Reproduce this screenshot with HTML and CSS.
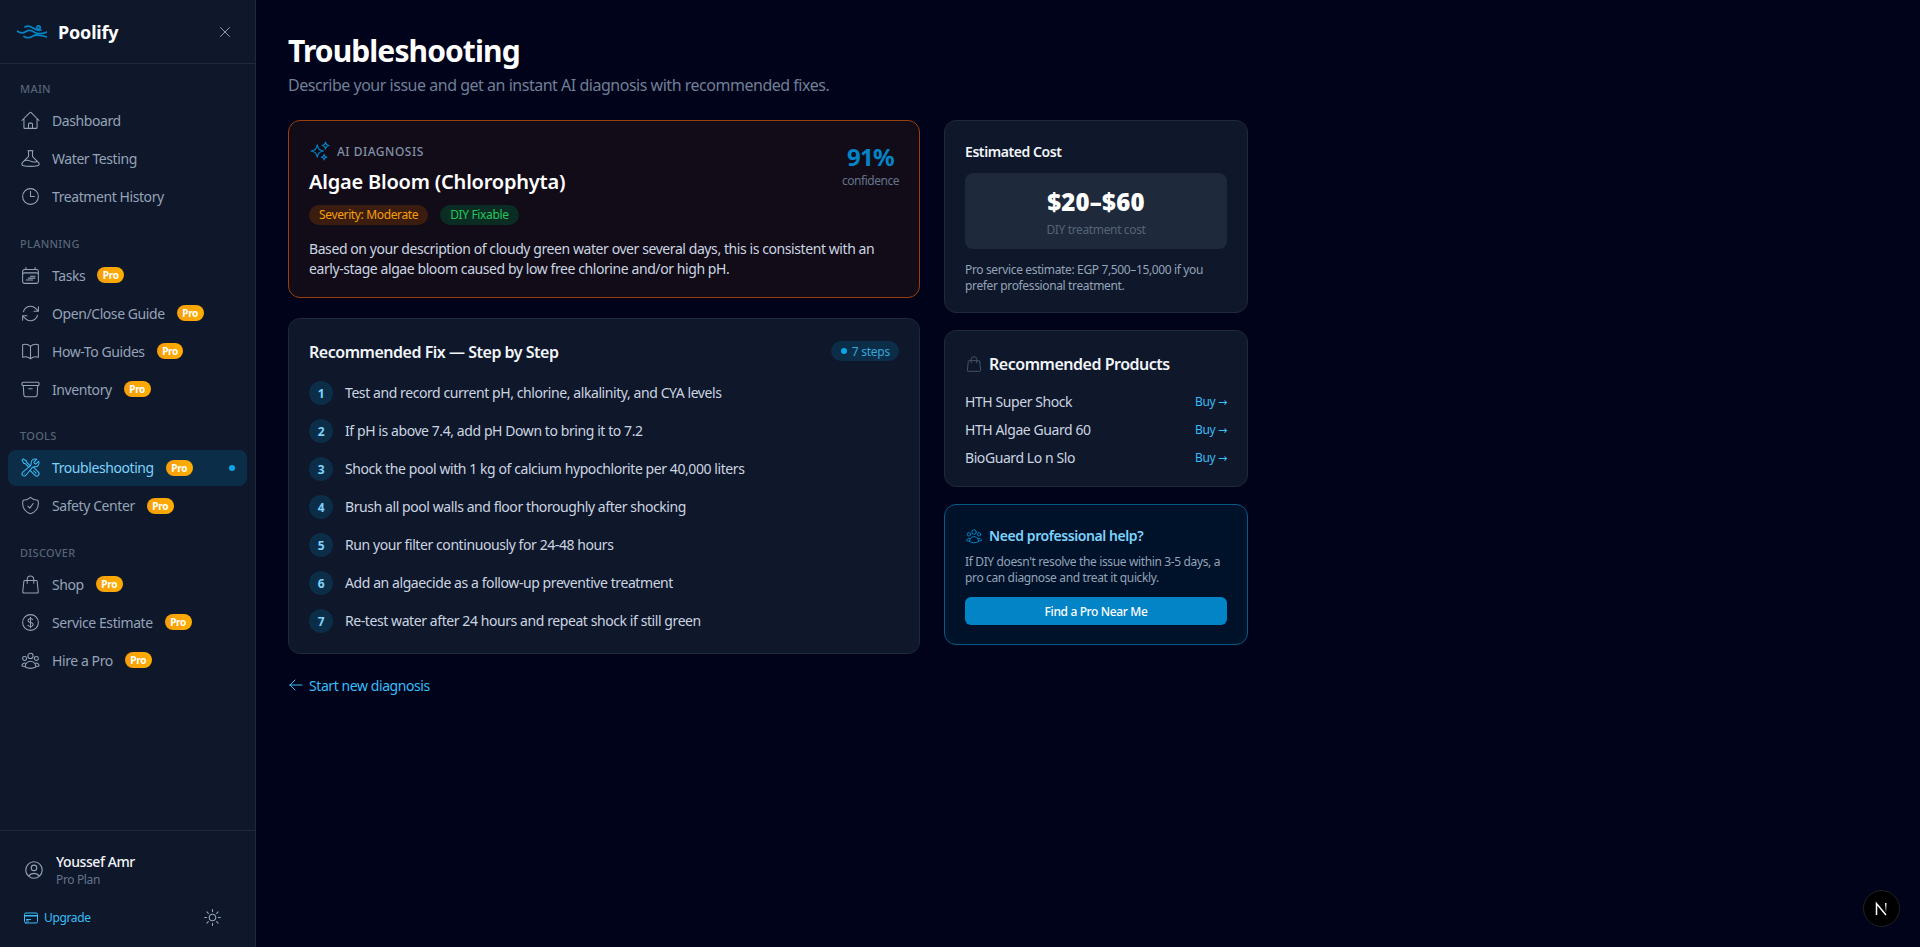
FILE: index.html
```html
<!DOCTYPE html>
<html>
<head>
    <title>Poolify - Troubleshooting</title>
    <link rel="stylesheet" href="styles.css">
</head>
<body>
<svg class="icon-defs" xmlns="http://www.w3.org/2000/svg">
    <symbol id="i-home" viewBox="0 0 24 24"><path d="m2.25 12 8.954-8.955c.44-.439 1.152-.439 1.591 0L21.75 12M4.5 9.75v10.125c0 .621.504 1.125 1.125 1.125H9.750v-4.875c0-.621.504-1.125 1.125-1.125h2.25c.621 0 1.125.504 1.125 1.125V21h4.125c.621 0 1.125-.504 1.125-1.125V9.75M8.25 21h8.25"/></symbol>
    <symbol id="i-beaker" viewBox="0 0 24 24"><path d="M9.75 3.104v5.714a2.25 2.25 0 0 1-.659 1.591L5 14.5M9.75 3.104c-.251.023-.501.05-.75.082m.75-.082a24.301 24.301 0 0 1 4.5 0m0 0v5.714c0 .597.237 1.17.659 1.591L19.8 15.3M14.25 3.104c.251.023.501.05.75.082M19.8 15.3l-1.57.393A9.065 9.065 0 0 1 12 15a9.065 9.065 0 0 0-6.23-.693L5 14.5m14.8.8 1.402 1.402c1.232 1.232.65 3.318-1.067 3.611A48.309 48.309 0 0 1 12 21c-2.773 0-5.491-.235-8.135-.687-1.718-.293-2.3-2.379-1.067-3.61L5 14.5"/></symbol>
    <symbol id="i-clock" viewBox="0 0 24 24"><path d="M12 6v6h4.5m4.5 0a9 9 0 1 1-18 0 9 9 0 0 1 18 0Z"/></symbol>
    <symbol id="i-calendar" viewBox="0 0 24 24"><path d="M6.75 3v2.25M17.25 3v2.25M3 18.75V7.5a2.25 2.25 0 0 1 2.25-2.25h13.5A2.25 2.25 0 0 1 21 7.5v11.25m-18 0A2.25 2.25 0 0 0 5.25 21h13.5A2.25 2.25 0 0 0 21 18.75m-18 0v-7.5A2.25 2.25 0 0 1 5.25 9h13.5A2.25 2.25 0 0 1 21 11.25v7.5M12 12.75h5.25M9.5 15h7.5M7 17.25h7.5"/></symbol>
    <symbol id="i-refresh" viewBox="0 0 24 24"><path d="M16.023 9.348h4.992v-.001M2.985 19.644v-4.992m0 0h4.992m-4.993 0 3.181 3.183a8.25 8.25 0 0 0 13.803-3.7M4.031 9.865a8.25 8.25 0 0 1 13.803-3.7l3.181 3.182m0-4.991v4.99"/></symbol>
    <symbol id="i-book" viewBox="0 0 24 24"><path d="M12 6.042A8.967 8.967 0 0 0 6 3.75c-1.052 0-2.062.18-3 .512v14.25A8.987 8.987 0 0 1 6 18c2.305 0 4.408.867 6 2.292m0-14.25a8.966 8.966 0 0 1 6-2.292c1.052 0 2.062.18 3 .512v14.25A8.987 8.987 0 0 0 18 18a8.967 8.967 0 0 0-6 2.292m0-14.25v14.25"/></symbol>
    <symbol id="i-archive" viewBox="0 0 24 24"><path d="m20.25 7.5-.625 10.632a2.25 2.25 0 0 1-2.247 2.118H6.622a2.25 2.25 0 0 1-2.247-2.118L3.75 7.5M10 11.25h4M3.375 7.5h17.25c.621 0 1.125-.504 1.125-1.125v-1.5c0-.621-.504-1.125-1.125-1.125H3.375c-.621 0-1.125.504-1.125 1.125v1.5c0 .621.504 1.125 1.125 1.125Z"/></symbol>
    <symbol id="i-wrench" viewBox="0 0 24 24"><path d="M11.42 15.17 17.25 21A2.652 2.652 0 0 0 21 17.25l-5.877-5.877M11.42 15.17l2.496-3.03c.317-.384.74-.626 1.208-.766M11.42 15.17l-4.655 5.653a2.548 2.548 0 1 1-3.586-3.586l6.837-5.63m5.108-.233c.55-.164 1.163-.188 1.743-.14a4.5 4.5 0 0 0 4.486-6.336l-3.276 3.277a3.004 3.004 0 0 1-2.25-2.25l3.276-3.276a4.5 4.5 0 0 0-6.336 4.486c.091 1.076-.071 2.264-.904 2.95l-.102.085m-1.745 1.437L5.909 7.5H4.5L2.25 3.75l1.5-1.5L7.5 4.5v1.409l4.26 4.26m-1.745 1.437 1.745-1.437m6.615 8.206L15.75 15.75M4.867 19.125h.008v.008h-.008v-.008Z"/></symbol>
    <symbol id="i-shield" viewBox="0 0 24 24"><path d="M9 12.75 11.25 15 15 9.75m-3-7.036A11.959 11.959 0 0 1 3.598 6 11.99 11.99 0 0 0 3 9.749c0 5.592 3.824 10.29 9 11.623 5.176-1.332 9-6.03 9-11.622 0-1.31-.21-2.571-.598-3.751h-.152c-3.196 0-6.1-1.248-8.25-3.285Z"/></symbol>
    <symbol id="i-bag" viewBox="0 0 24 24"><path d="M15.75 10.5V6a3.75 3.75 0 1 0-7.5 0v4.5m11.356-1.993 1.263 12c.07.665-.45 1.243-1.119 1.243H4.25a1.125 1.125 0 0 1-1.12-1.243l1.264-12A1.125 1.125 0 0 1 5.513 7.5h12.974c.576 0 1.059.435 1.119 1.007Z"/></symbol>
    <symbol id="i-dollar" viewBox="0 0 24 24"><path d="M12 6v12m-3-2.818.879.659c1.171.879 3.07.879 4.242 0 1.172-.879 1.172-2.303 0-3.182C13.536 12.219 12.768 12 12 12c-.725 0-1.45-.22-2.003-.659-1.106-.879-1.106-2.303 0-3.182s2.9-.879 4.006 0l.415.33M21 12a9 9 0 1 1-18 0 9 9 0 0 1 18 0Z"/></symbol>
    <symbol id="i-group" viewBox="0 0 24 24"><path d="M18 18.72a9.094 9.094 0 0 0 3.741-.479 3 3 0 0 0-4.682-2.72m.94 3.198.001.031c0 .225-.012.447-.037.666A11.944 11.944 0 0 1 12 21c-2.17 0-4.207-.576-5.963-1.584A6.062 6.062 0 0 1 6 18.719m12 0a5.971 5.971 0 0 0-.941-3.197m0 0A5.995 5.995 0 0 0 12 12.75a5.995 5.995 0 0 0-5.058 2.772m0 0a3 3 0 0 0-4.681 2.72 8.986 8.986 0 0 0 3.74.477m.94-3.197a5.971 5.971 0 0 0-.94 3.197M15 6.75a3 3 0 1 1-6 0 3 3 0 0 1 6 0Zm6 3a2.25 2.25 0 1 1-4.5 0 2.25 2.25 0 0 1 4.5 0Zm-13.5 0a2.25 2.25 0 1 1-4.5 0 2.25 2.25 0 0 1 4.5 0Z"/></symbol>
    <symbol id="i-user" viewBox="0 0 24 24"><path d="M17.982 18.725A7.488 7.488 0 0 0 12 15.75a7.488 7.488 0 0 0-5.982 2.975m11.963 0a9 9 0 1 0-11.963 0m11.963 0A8.966 8.966 0 0 1 12 21a8.966 8.966 0 0 1-5.982-2.275M15 9.75a3 3 0 1 1-6 0 3 3 0 0 1 6 0Z"/></symbol>
    <symbol id="i-card" viewBox="0 0 24 24"><path d="M2.25 8.25h19.5M2.25 9h19.5m-16.5 5.25h6m-6 2.25h3m-3.75 3h15a2.25 2.25 0 0 0 2.25-2.25V6.75A2.25 2.25 0 0 0 19.5 4.5h-15a2.25 2.25 0 0 0-2.25 2.25v10.5A2.25 2.25 0 0 0 4.5 19.5Z"/></symbol>
    <symbol id="i-sun" viewBox="0 0 24 24"><path d="M12 3v2.25m6.364.386-1.591 1.591M21 12h-2.25m-.386 6.364-1.591-1.591M12 18.75V21m-4.773-4.227-1.591 1.591M5.25 12H3m4.227-4.773L5.636 5.636M15.75 12a3.75 3.75 0 1 1-7.5 0 3.75 3.75 0 0 1 7.5 0Z"/></symbol>
    <symbol id="i-sparkles" viewBox="0 0 24 24"><path d="M9.813 15.904 9 18.75l-.813-2.846a4.5 4.5 0 0 0-3.09-3.09L2.25 12l2.846-.813a4.5 4.5 0 0 0 3.09-3.09L9 5.25l.813 2.846a4.5 4.5 0 0 0 3.09 3.09L15.75 12l-2.846.813a4.5 4.5 0 0 0-3.09 3.09ZM18.259 8.715 18 9.75l-.259-1.035a3.375 3.375 0 0 0-2.455-2.456L14.25 6l1.036-.259a3.375 3.375 0 0 0 2.455-2.456L18 2.25l.259 1.035a3.375 3.375 0 0 0 2.456 2.456L21.75 6l-1.035.259a3.375 3.375 0 0 0-2.456 2.456ZM16.894 20.567 16.5 21.75l-.394-1.183a2.25 2.25 0 0 0-1.423-1.423L13.5 18.75l1.183-.394a2.25 2.25 0 0 0 1.423-1.423l.394-1.183.394 1.183a2.25 2.25 0 0 0 1.423 1.423l1.183.394-1.183.394a2.25 2.25 0 0 0-1.423 1.423Z"/></symbol>
    <symbol id="i-close" viewBox="0 0 24 24"><path d="M6 18 18 6M6 6l12 12"/></symbol>
    <symbol id="i-left" viewBox="0 0 24 24"><path d="M10.5 19.5 3 12m0 0 7.5-7.5M3 12h18"/></symbol>
</svg>

<div class="app">
    <aside class="sidebar">
        <div class="brand">
            <svg class="brand-logo" viewBox="0 0 30 14">
                <path d="M8 2C11 0 13 1 16 3s5 3 8 2"/>
                <path d="M0 6c3 2.500 6 2.500 9 .5s5-1.500 8 .5 7 2.500 13 0"/>
                <path d="M7 11.500c3 2 6 1.500 9-.5s7-1 14 1"/>
                <circle cx="21.500" cy="2.500" r="1.700"/>
            </svg>
            <span class="brand-name">Poolify</span>
            <svg class="icon brand-close"><use href="#i-close"/></svg>
        </div>

        <nav class="nav">
            <div class="nav-label">MAIN</div>
            <a class="nav-item"><svg class="icon"><use href="#i-home"/></svg><span>Dashboard</span></a>
            <a class="nav-item"><svg class="icon"><use href="#i-beaker"/></svg><span>Water Testing</span></a>
            <a class="nav-item"><svg class="icon"><use href="#i-clock"/></svg><span>Treatment History</span></a>

            <div class="nav-label">PLANNING</div>
            <a class="nav-item"><svg class="icon"><use href="#i-calendar"/></svg><span>Tasks</span><b class="pro">Pro</b></a>
            <a class="nav-item"><svg class="icon"><use href="#i-refresh"/></svg><span>Open/Close Guide</span><b class="pro">Pro</b></a>
            <a class="nav-item"><svg class="icon"><use href="#i-book"/></svg><span>How-To Guides</span><b class="pro">Pro</b></a>
            <a class="nav-item"><svg class="icon"><use href="#i-archive"/></svg><span>Inventory</span><b class="pro">Pro</b></a>

            <div class="nav-label">TOOLS</div>
            <a class="nav-item active"><svg class="icon"><use href="#i-wrench"/></svg><span>Troubleshooting</span><b class="pro">Pro</b><i class="nav-dot"></i></a>
            <a class="nav-item"><svg class="icon"><use href="#i-shield"/></svg><span>Safety Center</span><b class="pro">Pro</b></a>

            <div class="nav-label">DISCOVER</div>
            <a class="nav-item"><svg class="icon"><use href="#i-bag"/></svg><span>Shop</span><b class="pro">Pro</b></a>
            <a class="nav-item"><svg class="icon"><use href="#i-dollar"/></svg><span>Service Estimate</span><b class="pro">Pro</b></a>
            <a class="nav-item"><svg class="icon"><use href="#i-group"/></svg><span>Hire a Pro</span><b class="pro">Pro</b></a>
        </nav>

        <div class="side-footer">
            <div class="user-row">
                <svg class="icon"><use href="#i-user"/></svg>
                <div>
                    <div class="user-name">Youssef Amr</div>
                    <div class="user-plan">Pro Plan</div>
                </div>
            </div>
            <div class="footer-row">
                <a class="upgrade"><svg class="icon"><use href="#i-card"/></svg>Upgrade</a>
                <svg class="icon theme-btn"><use href="#i-sun"/></svg>
            </div>
        </div>
    </aside>

    <main class="main">
        <h1>Troubleshooting</h1>
        <p class="subtitle">Describe your issue and get an instant AI diagnosis with recommended fixes.</p>

        <div class="columns">
            <div class="col-left">
                <section class="card diagnosis">
                    <div class="diag-top">
                        <div>
                            <div class="diag-label"><svg class="icon"><use href="#i-sparkles"/></svg>AI DIAGNOSIS</div>
                            <h2>Algae Bloom (Chlorophyta)</h2>
                        </div>
                        <div class="confidence">
                            <div class="conf-value">91%</div>
                            <div class="conf-label">confidence</div>
                        </div>
                    </div>
                    <div class="chips">
                        <span class="chip chip-orange">Severity: Moderate</span>
                        <span class="chip chip-green">DIY Fixable</span>
                    </div>
                    <p class="diag-text">Based on your description of cloudy green water over several days, this is consistent with an early-stage algae bloom caused by low free chlorine and/or high pH.</p>
                </section>

                <section class="card steps-card">
                    <div class="steps-head">
                        <h3>Recommended Fix — Step by Step</h3>
                        <span class="steps-count"><i></i>7 steps</span>
                    </div>
                    <ol class="steps">
                        <li><span class="num">1</span>Test and record current pH, chlorine, alkalinity, and CYA levels</li>
                        <li><span class="num">2</span>If pH is above 7.4, add pH Down to bring it to 7.2</li>
                        <li><span class="num">3</span>Shock the pool with 1 kg of calcium hypochlorite per 40,000 liters</li>
                        <li><span class="num">4</span>Brush all pool walls and floor thoroughly after shocking</li>
                        <li><span class="num">5</span>Run your filter continuously for 24-48 hours</li>
                        <li><span class="num">6</span>Add an algaecide as a follow-up preventive treatment</li>
                        <li><span class="num">7</span>Re-test water after 24 hours and repeat shock if still green</li>
                    </ol>
                </section>

                <a class="back-link"><svg class="icon"><use href="#i-left"/></svg>Start new diagnosis</a>
            </div>

            <div class="col-right">
                <section class="card cost-card">
                    <h4>Estimated Cost</h4>
                    <div class="cost-box">
                        <div class="cost-value">$20–$60</div>
                        <div class="cost-label">DIY treatment cost</div>
                    </div>
                    <p class="cost-note">Pro service estimate: EGP 7,500–15,000 if you prefer professional treatment.</p>
                </section>

                <section class="card products-card">
                    <h3 class="products-title"><svg class="icon"><use href="#i-bag"/></svg>Recommended Products</h3>
                    <div class="product"><span>HTH Super Shock</span><a>Buy <span class="arrow">→</span></a></div>
                    <div class="product"><span>HTH Algae Guard 60</span><a>Buy <span class="arrow">→</span></a></div>
                    <div class="product"><span>BioGuard Lo n Slo</span><a>Buy <span class="arrow">→</span></a></div>
                </section>

                <section class="card help-card">
                    <h4 class="help-title"><svg class="icon"><use href="#i-group"/></svg>Need professional help?</h4>
                    <p>If DIY doesn't resolve the issue within 3-5 days, a pro can diagnose and treat it quickly.</p>
                    <button class="btn">Find a Pro Near Me</button>
                </section>
            </div>
        </div>
    </main>
</div>

<div class="dev-badge">
    <svg viewBox="0 0 18 18" class="dev-logo">
        <defs>
            <linearGradient id="fade" x1="0" y1="0" x2="0" y2="1">
                <stop offset="0" stop-color="#fff"/>
                <stop offset="1" stop-color="#fff" stop-opacity="0.1"/>
            </linearGradient>
        </defs>
        <path d="M3.500 15V3.500L13 15" fill="none" stroke="#fff" stroke-width="1.500"/>
        <rect x="12" y="3" width="1.500" height="9" fill="url(#fade)"/>
    </svg>
</div>
</body>
</html>
```

FILE: styles.css
```css
* {
    box-sizing: border-box;
    letter-spacing: -0.03em;
}
body {
    margin: 0;
    height: 100vh;
    overflow: hidden;
    font-family: "Noto Sans", "Open Sans", sans-serif;
    font-size: 14px;
    background-color: #01031a;
    color: #cbd5e1;
}
.icon-defs {
    display: none;
}
.icon {
    width: 20px;
    height: 20px;
    flex-shrink: 0;
    fill: none;
    stroke: currentColor;
    stroke-width: 1.5;
    stroke-linecap: round;
    stroke-linejoin: round;
}
.app {
    display: flex;
    height: 100%;
}

/* sidebar */
.sidebar {
    width: 256px;
    flex-shrink: 0;
    display: flex;
    flex-direction: column;
    background-color: #0f172a;
    border-right: 1px solid #1e293b;
}
.brand {
    height: 64px;
    display: flex;
    align-items: center;
    padding: 0 21px 0 17px;
    border-bottom: 1px solid #1e293b;
}
.brand-logo {
    width: 30px;
    height: 14px;
    fill: none;
    stroke: #0284c7;
    stroke-width: 1.7;
    stroke-linecap: round;
}
.brand-name {
    margin-left: 11px;
    flex: 1;
    font-size: 18px;
    font-weight: 700;
    letter-spacing: -0.01em;
    color: #fff;
}
.brand-close {
    width: 18px;
    height: 18px;
    stroke-width: 1.25;
    color: #94a3b8;
}
.nav {
    flex: 1;
    padding: 16px 8px 0;
}
.nav-label {
    height: 18.5px;
    margin: 0 0 4px 12px;
    font-size: 11px;
    line-height: 17px;
    font-weight: 500;
    letter-spacing: 0.3px;
    color: #566478;
}
.nav-item + .nav-label {
    margin-top: 20px;
}
.nav-item {
    height: 36px;
    margin-bottom: 2px;
    padding: 0 12px;
    display: flex;
    align-items: center;
    gap: 11px;
    border-radius: 8px;
    color: #94a3b8;
    font-size: 14px;
}
.nav-item .icon {
    width: 21px;
    height: 21px;
    stroke-width: 1.2;
}
.nav-item .pro {
    margin-left: 1px;
}
.nav-item.active {
    background-color: #0c2d48;
    color: #7dd3fc;
}
.nav-item.active .icon {
    color: #38bdf8;
}
.nav-dot {
    width: 6px;
    height: 6px;
    margin-left: auto;
    border-radius: 50%;
    background-color: #0ea5e9;
}
.pro {
    height: 16px;
    padding: 0 5.5px;
    border-radius: 999px;
    background-color: #f59e0b;
    background-image: linear-gradient(90deg, #f59e0b, #ffae00);
    color: #fff;
    font-size: 10px;
    line-height: 16px;
    font-weight: 700;
}
.side-footer {
    border-top: 1px solid #1e293b;
    padding: 21px 16px 0;
    height: 117px;
}
.user-row {
    display: flex;
    align-items: center;
    gap: 11px;
    padding-left: 7px;
    color: #94a3b8;
}
.user-row .icon {
    width: 22px;
    height: 22px;
    stroke-width: 1.25;
}
.user-name {
    font-size: 14px;
    line-height: 20px;
    font-weight: 500;
    color: #f1f5f9;
}
.user-plan {
    font-size: 12px;
    line-height: 16px;
    color: #64748b;
}
.footer-row {
    margin-top: 19px;
    display: flex;
    align-items: center;
    justify-content: space-between;
    padding: 0 16px 0 7px;
}
.upgrade {
    display: flex;
    align-items: center;
    gap: 5px;
    font-size: 12px;
    color: #38bdf8;
}
.upgrade .icon {
    width: 16px;
    height: 16px;
}
.theme-btn {
    width: 21px;
    height: 21px;
    stroke-width: 1.25;
    color: #94a3b8;
}

/* main */
.main {
    flex: 1;
    padding: 33px 32px 32px;
}
h1 {
    margin: 0;
    font-size: 30px;
    line-height: 36px;
    font-weight: 700;
    color: #fff;
}
.subtitle {
    margin: 4px 0 0;
    font-size: 16px;
    line-height: 24px;
    color: #6f7f96;
}
.columns {
    width: 960px;
    margin-top: 23px;
    display: grid;
    grid-template-columns: 632px 304px;
    gap: 24px;
    align-items: start;
}
.col-left {
    display: flex;
    flex-direction: column;
    gap: 20px;
}
.col-right {
    display: flex;
    flex-direction: column;
    gap: 17px;
}
.card {
    background-color: #0f172a;
    border: 1px solid #1e293b;
    border-radius: 12px;
    padding: 20px;
}
.diagnosis {
    height: 178px;
    background-color: #120c18;
    border-color: #9a3f0c;
}
.diag-top {
    display: flex;
    justify-content: space-between;
}
.diag-label {
    display: flex;
    align-items: center;
    gap: 6px;
    height: 20px;
    font-size: 12px;
    font-weight: 500;
    letter-spacing: 0.5px;
    color: #8291a7;
}
.diag-label .icon {
    color: #0284c7;
    width: 22px;
    height: 22px;
    stroke-width: 1.25;
}
h2 {
    margin: 7px 0 0;
    font-size: 20px;
    line-height: 28px;
    font-weight: 600;
    letter-spacing: -0.01em;
    color: #fff;
}
.confidence {
    text-align: center;
}
.conf-value {
    font-size: 24px;
    line-height: 32px;
    font-weight: 700;
    color: #0284c7;
}
.conf-label {
    font-size: 12px;
    line-height: 16px;
    letter-spacing: -0.04em;
    color: #64748b;
}
.chips {
    margin-top: 9px;
    display: flex;
    gap: 12px;
}
.chip {
    height: 20px;
    padding: 0 10px;
    border-radius: 999px;
    font-size: 12px;
    line-height: 20px;
}
.chip-orange {
    background-color: #3b1d10;
    color: #f59e0b;
}
.chip-green {
    background-color: #0b2c22;
    color: #22c55e;
}
.diag-text {
    margin: 14px 0 0;
    font-size: 14px;
    line-height: 20px;
    color: #cbd5e1;
}
.steps-card {
    height: 336px;
}
.steps-head {
    display: flex;
    justify-content: space-between;
    align-items: flex-start;
}
h3 {
    margin: 0;
    font-size: 16px;
    line-height: 26px;
    font-weight: 600;
    color: #f1f5f9;
}
.steps-count {
    display: flex;
    align-items: center;
    gap: 5px;
    height: 20px;
    margin-top: 2px;
    padding: 0 9px 0 10px;
    border-radius: 999px;
    background-color: #0c2d48;
    color: #38a5d8;
    font-size: 12px;
    letter-spacing: -0.02em;
}
.steps-count i {
    width: 6px;
    height: 6px;
    border-radius: 50%;
    background-color: #0ea5e9;
}
.steps {
    list-style: none;
    margin: 8px 0 0;
    padding: 0;
}
.steps li {
    height: 38px;
    display: flex;
    align-items: center;
    gap: 12px;
    font-size: 14px;
    color: #cbd5e1;
}
.num {
    width: 24px;
    height: 24px;
    margin-top: 2px;
    display: flex;
    align-items: center;
    justify-content: center;
    border-radius: 50%;
    background-color: #0c2d48;
    color: #7dd3fc;
    font-size: 12px;
    font-weight: 700;
}
.back-link {
    display: flex;
    align-items: center;
    gap: 5px;
    height: 20px;
    margin-top: 1px;
    color: #38bdf8;
    font-size: 14px;
}
.back-link .icon {
    width: 16px;
    height: 16px;
}

/* right column */
h4 {
    margin: 0;
    font-size: 14px;
    line-height: 22px;
    font-weight: 600;
    color: #f1f5f9;
}
.cost-card {
    padding-bottom: 18px;
}
.cost-box {
    margin-top: 10px;
    height: 76px;
    padding-top: 14px;
    background-color: #1e293b;
    border-radius: 8px;
    text-align: center;
}
.cost-value {
    font-size: 24px;
    line-height: 30px;
    font-weight: 900;
    letter-spacing: 0.01em;
    color: #fff;
}
.cost-label {
    margin-top: 4px;
    font-size: 12px;
    line-height: 18px;
    color: #566478;
}
.cost-note {
    margin: 13px 0 0;
    font-size: 12px;
    line-height: 16px;
    color: #94a3b8;
}
.products-card {
    padding-bottom: 15px;
}
.products-title {
    display: flex;
    align-items: center;
    gap: 6px;
    margin-bottom: 10px;
}
.products-title .icon {
    width: 18px;
    height: 18px;
    stroke-width: 1.25;
    color: #475569;
}
.product {
    height: 28px;
    display: flex;
    align-items: center;
    justify-content: space-between;
    font-size: 14px;
    color: #cbd5e1;
}
.product a {
    font-size: 12px;
    color: #38bdf8;
}
.arrow {
    font-family: "DejaVu Sans", sans-serif;
    font-size: 11px;
}
.help-card {
    padding-bottom: 19px;
    background-color: #001229;
    border-color: #075985;
}
.help-title {
    display: flex;
    align-items: center;
    gap: 6px;
    color: #7dd3fc;
}
.help-title .icon {
    width: 18px;
    height: 18px;
    stroke-width: 1.25;
    color: #0284c7;
}
.help-card p {
    margin: 7px 0 0;
    font-size: 12px;
    line-height: 16px;
    color: #94a3b8;
}
.btn {
    width: 100%;
    height: 28px;
    margin-top: 11px;
    border: none;
    border-radius: 6px;
    background-color: #0284c7;
    color: #fff;
    font-family: inherit;
    font-size: 12px;
    font-weight: 500;
}
.dev-badge {
    position: fixed;
    right: 20px;
    bottom: 20px;
    width: 37px;
    height: 37px;
    display: flex;
    align-items: center;
    justify-content: center;
    border-radius: 50%;
    background-color: #000;
    border: 1px solid #222;
}
.dev-logo {
    width: 18px;
    height: 18px;
}
```
